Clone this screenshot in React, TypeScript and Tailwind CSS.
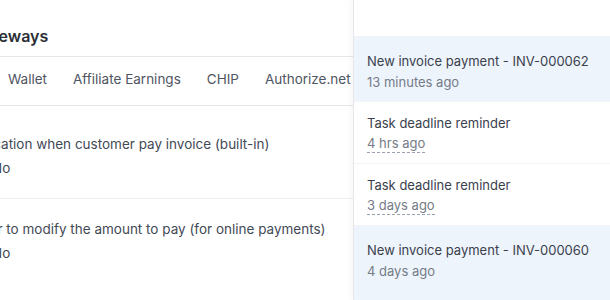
import React from "react";

const notifications = [
  { title: "New invoice payment - INV-000062", time: "13 minutes ago", unread: true },
  { title: "Task deadline reminder", time: "4 hrs ago", unread: false },
  { title: "Task deadline reminder", time: "3 days ago", unread: false },
  { title: "New invoice payment - INV-000060", time: "4 days ago", unread: true },
];

const tabs = ["Wallet", "Affiliate Earnings", "CHIP", "Authorize.net AIM"];

export default function App() {
  return (
    <div
      className="flex h-[300px] w-[610px] overflow-hidden bg-white"
      style={{ fontFamily: "Inter, 'Noto Sans', sans-serif" }}
    >
      {/* Settings page (scrolled so its left part is off screen) */}
      <div className="w-[353px] shrink-0 overflow-hidden">
        <div className="border-b border-gray-200 pt-[24px] pb-[7px]">
          <h2 className="-ml-[100px] whitespace-nowrap text-[16px] font-semibold leading-[25px] text-[#2b2f36]">
            Payment Gateways
          </h2>
        </div>
        <div className="flex h-[49px] items-center gap-[26px] border-b border-gray-200 pb-[3px] pl-2">
          {tabs.map((t) => (
            <span key={t} className="whitespace-nowrap text-[13.5px] text-[#4f5562]">
              {t}
            </span>
          ))}
        </div>
        <div className="border-b border-gray-200/70 pt-[28px] pb-[20px]">
          <p className="-ml-[93px] whitespace-nowrap text-[13.5px] leading-5 text-[#434a55]">
            Receive notification when customer pay invoice (built-in)
          </p>
          <div className="mt-1 -ml-[8px] text-[13.5px] leading-5 text-[#434a55]">No</div>
        </div>
        <div className="pt-[20px]">
          <p className="-ml-[96px] whitespace-nowrap text-[13.5px] leading-5 text-[#434a55]">
            Allow customer to modify the amount to pay (for online payments)
          </p>
          <div className="mt-1 -ml-[8px] text-[13.5px] leading-5 text-[#434a55]">No</div>
        </div>
      </div>

      {/* Notifications panel */}
      <div className="flex-1 border-l border-gray-200 bg-white shadow-[-2px_0_6px_rgba(0,0,0,0.04)]">
        <div className="h-[37px] border-b border-gray-100" />
        {notifications.map((n, i) => (
          <div
            key={i}
            className={`flex flex-col items-start border-b border-gray-100 px-[13px] ${
              n.unread ? "bg-[#eef4fc] pt-[15px] pb-[10px]" : "bg-white pt-[12px] pb-[10px]"
            }`}
          >
            <p className="whitespace-nowrap text-[13px] leading-[19px] text-[#3a414d]">{n.title}</p>
            <span
              className={`text-[13px] leading-[18px] text-[#757c88] ${
                n.unread ? "mt-[2px]" : "mt-[1px] border-b border-dashed border-gray-400"
              }`}
            >
              {n.time}
            </span>
          </div>
        ))}
        <div className="h-[20px] bg-[#eef4fc]" />
      </div>
    </div>
  );
}
